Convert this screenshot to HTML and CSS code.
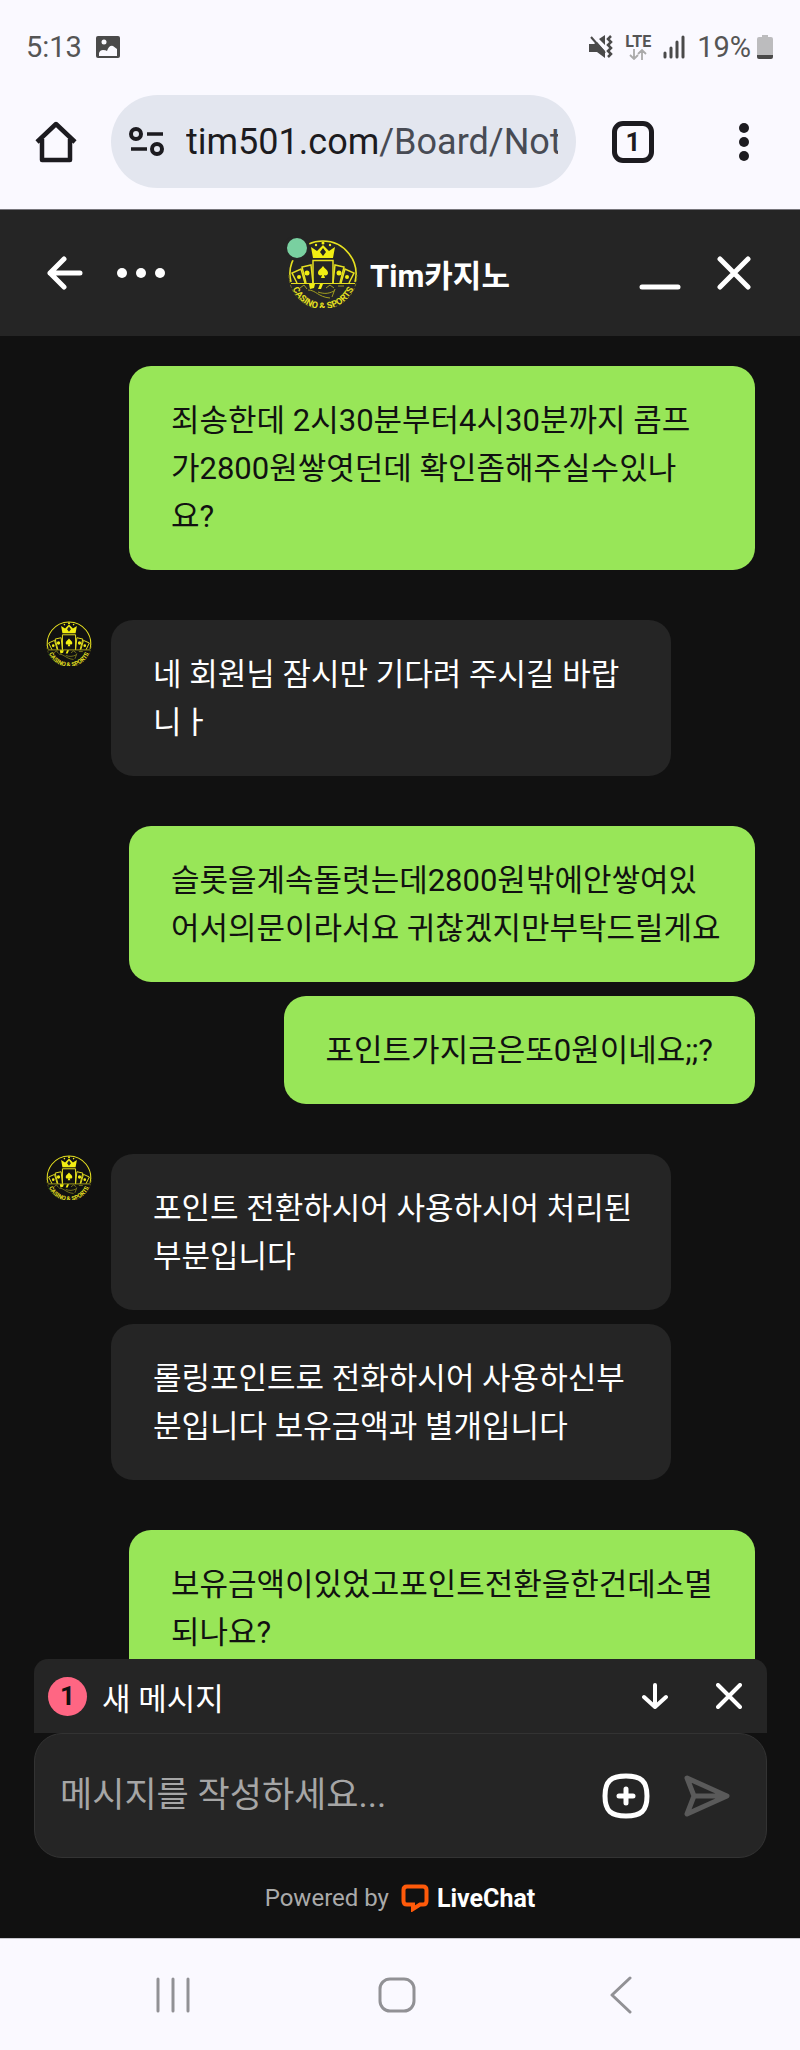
FILE: index.html
```html
<!DOCTYPE html>
<html lang="ko">
<head>
    <meta charset="utf-8">
    <meta name="viewport" content="width=device-width, initial-scale=1">
    <title>Tim카지노</title>
    <link rel="stylesheet" href="styles.css">
</head>
<body>

<!-- casino logo, shared by the header and the message avatars -->
<svg class="defs" aria-hidden="true">
    <symbol id="logo" viewBox="0 0 70 70">
        <path d="M3 44A33 33 0 1 1 67 44" fill="none" stroke="#e6e020" stroke-width="1.6"/>
        <path d="M1 37A34 34 0 0 0 69 37" fill="none" stroke="#77741d" stroke-width="1" stroke-dasharray="3 2"/>
        <path d="M25 20L23 9l6 4 6-6 6 6 6-4-2 11z" fill="#f2ee12"/>
        <path d="M35 10l3 4-3 4-3-4z" fill="#252525"/>
        <g fill="#f2ee12"><circle cx="28" cy="7" r="1.2"/><circle cx="35" cy="5" r="1.5"/><circle cx="42" cy="7" r="1.2"/></g>
        <g fill="none" stroke="#e6e020" stroke-width="1.5">
            <path d="M25 45V22.5h20V45"/>
            <path d="M18 45l-4-16 9-2 2 18M52 45l4-16-9-2-2 18"/>
            <path d="M9 45l-5-10 9-4 4 14M61 45l5-10-9-4-4 14"/>
            <path d="M3 45.5h64" stroke-width="1"/>
        </g>
        <g fill="#f2ee12">
            <path d="M35 28c2 3 5 4 5 7 0 2-2 3-4 2l1 3h-4l1-3c-2 1-4 0-4-2 0-3 3-4 5-7z"/>
            <circle cx="19" cy="35" r="2.5"/><circle cx="51" cy="35" r="2.5"/>
            <circle cx="11" cy="39" r="2"/><circle cx="59" cy="39" r="2"/>
            <path d="M21 46h6l-1 4-4 1zM32 46h3l-2 5h-3z"/>
        </g>
        <path d="M12 50l4-3 3 4M38 50l4-3 4 3M50 48h6M20 52c8 0 10 7 22 8M30 54c6 2 10 2 16-1M44 59l3-8" fill="none" stroke="#a19d20" stroke-width="1"/>
        <path id="arc" d="M2 38A33 33 0 0 0 68 38" fill="none"/>
        <text class="logo-text"><textPath href="#arc" startOffset="50%">CASINO &amp; SPORTS</textPath></text>
    </symbol>
</svg>

<div class="status-bar">
    <span>5:13</span>
    <svg width="24" height="22" viewBox="0 0 24 22">
        <path d="M2 0h20q2 0 2 2v18q0 2-2 2H2q-2 0-2-2V2q0-2 2-2z" fill="#4a4a4a"/>
        <path d="M3 20v-3q1-3 4-3 3 0 4 1 2-6 6-5l4 3v7z" fill="#faf9ff"/>
        <circle cx="8" cy="6" r="2.5" fill="#faf9ff"/>
    </svg>
    <div class="status-right">
        <svg width="24" height="24" viewBox="0 0 24 24">
            <path d="M0 9h5l3-2 8 9v7l-8-6H0zM10 4l6-4v10z" fill="#4a4a4a"/>
            <path d="M2 2l14 16" stroke="#4a4a4a" stroke-width="2"/>
            <path d="M22 1l-3 3 3 3-3 3 3 3-3 3 3 3-3 3" fill="none" stroke="#4a4a4a" stroke-width="2.5"/>
        </svg>
        <div class="lte">
            <b>LTE</b>
            <svg width="18" height="11" viewBox="0 0 18 11"><path d="M5 0v10M1 6l4 4 4-4M13 11V1M9 5l4-4 4 4" fill="none" stroke="#aaa" stroke-width="1.8"/></svg>
        </div>
        <svg width="22" height="24" viewBox="0 0 22 24"><path d="M2 18v4M8 13v9M14 7v15M20 2v20" stroke="#4a4a4a" stroke-width="3" stroke-linecap="round"/></svg>
        <span>19%</span>
        <svg width="16" height="24" viewBox="0 0 16 24">
            <path d="M5 0h6v2h3q2 0 2 2v16H0V4q0-2 2-2h3z" fill="#bcbcbe"/>
            <path d="M0 20h16v2q0 2-2 2H2q-2 0-2-2z" fill="#4a4a4a"/>
        </svg>
    </div>
</div>

<div class="toolbar">
    <button class="home" aria-label="홈">
        <svg width="42" height="42" viewBox="0 0 42 42"><path d="M2 21L21 3l19 18M7 18v21h28V18" fill="none" stroke="#1c1b20" stroke-width="4.5" stroke-linejoin="round"/></svg>
    </button>
    <a class="address" href="#">
        <svg width="36" height="32" viewBox="0 0 36 32">
            <g fill="none" stroke="#1c1b20" stroke-width="4"><circle cx="7" cy="8" r="5"/><circle cx="28" cy="23" r="5"/><path d="M18 8h16M2 23h16" stroke-width="3.5"/></g>
        </svg>
        <span class="url">tim501.com<span class="path">/Board/Notice</span></span>
    </a>
    <button class="tabs" aria-label="탭">1</button>
    <button class="menu" aria-label="메뉴">
        <svg width="10" height="38" viewBox="0 0 10 38" fill="#1c1b20"><circle cx="5" cy="5" r="5"/><circle cx="5" cy="19" r="5"/><circle cx="5" cy="33" r="5"/></svg>
    </button>
</div>

<div class="chat">
    <header class="chat-header">
        <div class="header-left">
            <button aria-label="뒤로">
                <svg width="36" height="34" viewBox="0 0 36 34"><path d="M33 17H3M17 3L3 17l14 14" class="line"/></svg>
            </button>
            <button aria-label="더보기">
                <svg width="48" height="10" viewBox="0 0 48 10" fill="#fff"><circle cx="5" cy="5" r="5"/><circle cx="24" cy="5" r="5"/><circle cx="43" cy="5" r="5"/></svg>
            </button>
        </div>
        <div class="agent">
            <div class="agent-logo">
                <svg width="70" height="70"><use href="#logo"/></svg>
                <span class="online"></span>
            </div>
            <h1>Tim카지노</h1>
        </div>
        <div class="header-right">
            <button aria-label="최소화">
                <svg width="42" height="34" viewBox="0 0 42 34"><path d="M3 31h36" class="line"/></svg>
            </button>
            <button aria-label="닫기">
                <svg width="34" height="34" viewBox="0 0 34 34"><path d="M3 3l28 28M31 3L3 31" class="line"/></svg>
            </button>
        </div>
    </header>

    <main class="messages">
        <div class="group user">
            <p class="bubble long">죄송한데 2시30분부터4시30분까지 콤프<br>가2800원쌓엿던데 확인좀해주실수있나<br>요?</p>
        </div>
        <div class="group">
            <svg class="avatar" width="46" height="46"><use href="#logo"/></svg>
            <div class="bubbles">
                <p class="bubble">네 회원님 잠시만 기다려 주시길 바랍<br>니ㅏ</p>
            </div>
        </div>
        <div class="group user">
            <p class="bubble long">슬롯을계속돌렷는데2800원밖에안쌓여있<br>어서의문이라서요 귀찮겠지만부탁드릴게요</p>
            <p class="bubble">포인트가지금은또0원이네요;;?</p>
        </div>
        <div class="group">
            <svg class="avatar" width="46" height="46"><use href="#logo"/></svg>
            <div class="bubbles">
                <p class="bubble">포인트 전환하시어 사용하시어 처리된<br>부분입니다</p>
                <p class="bubble">롤링포인트로 전화하시어 사용하신부<br>분입니다 보유금액과 별개입니다</p>
            </div>
        </div>
        <div class="group user">
            <p class="bubble long">보유금액이있었고포인트전환을한건데소멸<br>되나요?</p>
        </div>
    </main>

    <div class="new-message">
        <span class="count">1</span>
        <span>새 메시지</span>
        <div class="new-actions">
            <button aria-label="아래로">
                <svg width="26" height="26" viewBox="0 0 26 26"><path d="M13 2v22M2 14l11 10 11-10" class="line thin"/></svg>
            </button>
            <button aria-label="알림 닫기">
                <svg width="26" height="26" viewBox="0 0 26 26"><path d="M2 2l22 22M24 2L2 24" class="line thin"/></svg>
            </button>
        </div>
    </div>

    <form class="composer">
        <input type="text" aria-label="메시지" placeholder="메시지를 작성하세요...">
        <button type="button" aria-label="첨부">
            <svg width="48" height="46" viewBox="0 0 48 46">
                <path d="M24 3C39 3 45 8 45 23S39 43 24 43 3 38 3 23 9 3 24 3z" fill="none" stroke="#fff" stroke-width="5"/>
                <path d="M24 16v14M17 23h14" class="line"/>
            </svg>
        </button>
        <button type="submit" aria-label="보내기">
            <svg width="46" height="42" viewBox="0 0 46 42"><path d="M3 3l40 18L3 39l7-18zM10 21h32" fill="none" stroke="#5a5a5a" stroke-width="5" stroke-linejoin="round" stroke-linecap="round"/></svg>
        </button>
    </form>

    <footer class="powered">
        <span>Powered by</span>
        <a href="#">
            <svg width="28" height="28" viewBox="0 0 28 28"><path d="M6 2.5h16q3.500 0 3.500 3.500v11q0 3.500-3.500 3.500h-3L12 25v-4.500H6q-3.500 0-3.500-3.500V6q0-3.500 3.500-3.500z" fill="none" stroke="#ff5a0a" stroke-width="4"/></svg>
            LiveChat
        </a>
    </footer>
</div>

<nav class="nav-bar">
    <button aria-label="최근 앱">
        <svg width="36" height="36" viewBox="0 0 36 36"><path d="M3 2v32M18 2v32M33 2v32" class="nav-line"/></svg>
    </button>
    <button aria-label="홈 화면">
        <svg width="38" height="36" viewBox="0 0 38 36"><rect x="2" y="2" width="34" height="32" rx="10" class="nav-line"/></svg>
    </button>
    <button aria-label="뒤로 가기">
        <svg width="22" height="38" viewBox="0 0 22 38"><path d="M20 2L2 19l18 17" class="nav-line"/></svg>
    </button>
</nav>

</body>
</html>
```

FILE: styles.css
```css
* {
    box-sizing: border-box;
}

body {
    margin: 0;
    height: 100vh;
    display: flex;
    flex-direction: column;
    background-color: #faf9ff;
    font-family: Roboto, "Noto Sans CJK KR", sans-serif;
    font-size: 31px;
}

button {
    display: flex;
    padding: 0;
    border: none;
    background: none;
    font: inherit;
}

svg {
    display: block;
    flex-shrink: 0;
}

.defs {
    display: none;
}

.logo-text {
    font-size: 9px;
    font-weight: bold;
    text-anchor: middle;
    fill: #e6e020;
}

.line {
    fill: none;
    stroke: #fff;
    stroke-width: 5;
    stroke-linecap: round;
    stroke-linejoin: round;
}

.line.thin {
    stroke-width: 4;
}

/* phone status bar */
.status-bar {
    display: flex;
    flex-shrink: 0;
    align-items: center;
    gap: 14px;
    height: 94px;
    padding: 0 27px 0 26px;
    color: #555;
    font-size: 29px;
}

.status-right {
    display: flex;
    align-items: center;
    gap: 12px;
    margin-left: auto;
}

.status-right span {
    margin-right: -6px;
}

.lte {
    display: flex;
    flex-direction: column;
    align-items: center;
    font-size: 16px;
    line-height: 14px;
}

/* browser toolbar */
.toolbar {
    display: flex;
    flex-shrink: 0;
    align-items: center;
    height: 116px;
    padding: 0 51px 20px 35px;
    border-bottom: 1px solid #77767c;
}

.address {
    display: flex;
    align-items: center;
    gap: 21px;
    flex: 1;
    min-width: 0;
    height: 93px;
    margin: 0 36px 0 34px;
    padding: 0 18px;
    border-radius: 47px;
    background-color: #e3e6ef;
    color: #1c1b20;
    font-size: 36px;
    text-decoration: none;
}

.url {
    overflow: hidden;
    white-space: nowrap;
}

.path {
    color: #484b54;
}

.tabs {
    align-items: center;
    justify-content: center;
    width: 42px;
    height: 42px;
    border: 5px solid #1c1b20;
    border-radius: 11px;
    color: #1c1b20;
    font-size: 26px;
    font-weight: bold;
}

.menu {
    margin-left: 85px;
}

/* chat window */
.chat {
    display: flex;
    flex-direction: column;
    flex: 1;
    min-height: 0;
    background-color: #111;
    color: #fff;
}

.chat-header {
    display: grid;
    flex-shrink: 0;
    grid-template-columns: 1fr auto 1fr;
    align-items: center;
    height: 126px;
    padding: 0 49px 0 47px;
    background-color: #252525;
}

.header-left,
.header-right,
.agent {
    display: flex;
    align-items: center;
}

.header-left {
    gap: 34px;
}

.header-right {
    gap: 36px;
    justify-content: flex-end;
}

.agent {
    gap: 12px;
}

.agent-logo {
    position: relative;
}

.online {
    position: absolute;
    top: -3px;
    left: -4px;
    width: 26px;
    height: 26px;
    border: 3px solid #252525;
    border-radius: 50%;
    background-color: #79d0a0;
}

h1 {
    margin: 0;
    font-size: 31px;
    font-weight: bold;
}

.messages {
    display: flex;
    flex-direction: column;
    gap: 50px;
    flex: 1;
    min-height: 0;
    padding: 30px 45px 0 46px;
    overflow: hidden;
}

.group {
    display: flex;
    flex-shrink: 0;
    align-items: flex-start;
    gap: 19px;
}

.user {
    flex-direction: column;
    align-items: flex-end;
    gap: 14px;
}

.bubbles {
    display: flex;
    flex-direction: column;
    gap: 14px;
    width: 87%;
    max-width: 560px;
}

.bubble {
    margin: 0;
    padding: 31px 42px 29px;
    border-radius: 22px;
    background-color: #252525;
    line-height: 48px;
    white-space: nowrap;
}

.user .bubble {
    background-color: #98e658;
    color: #111;
}

.user .long {
    width: calc(100% - 83px);
}

.new-message {
    display: flex;
    flex-shrink: 0;
    align-items: center;
    gap: 15px;
    height: 74px;
    margin: 0 33px 0 34px;
    padding: 0 25px 0 14px;
    border-radius: 14px 14px 0 0;
    background-color: #252525;
}

.count {
    width: 39px;
    height: 39px;
    border-radius: 50%;
    background-color: #ff6683;
    color: #111;
    font-size: 26px;
    font-weight: bold;
    line-height: 39px;
    text-align: center;
}

.new-actions {
    display: flex;
    gap: 48px;
    margin-left: auto;
}

.composer {
    display: flex;
    flex-shrink: 0;
    align-items: center;
    gap: 34px;
    height: 125px;
    margin: 0 33px 0 34px;
    padding: 0 36px 0 25px;
    border: 1px solid #333;
    border-radius: 28px;
    background-color: #252525;
}

.composer input {
    flex: 1;
    min-width: 0;
    padding: 0;
    border: none;
    background: none;
    color: #fff;
    font: inherit;
    font-size: 35px;
}

.composer input::placeholder {
    color: #a6a6a6;
}

.powered {
    display: flex;
    flex-shrink: 0;
    align-items: center;
    justify-content: center;
    gap: 12px;
    height: 80px;
    color: #aaa;
    font-size: 24px;
}

.powered a {
    display: flex;
    align-items: center;
    gap: 8px;
    color: #fff;
    font-size: 25px;
    font-weight: bold;
    text-decoration: none;
}

/* phone navigation bar */
.nav-bar {
    display: flex;
    flex-shrink: 0;
    height: 112px;
    padding: 0 67px 0 61px;
    border-top: 1px solid #c8c7cd;
}

.nav-bar button {
    flex: 1;
    align-items: center;
    justify-content: center;
}

.nav-line {
    fill: none;
    stroke: #919195;
    stroke-width: 3;
    stroke-linecap: round;
    stroke-linejoin: round;
}
```
